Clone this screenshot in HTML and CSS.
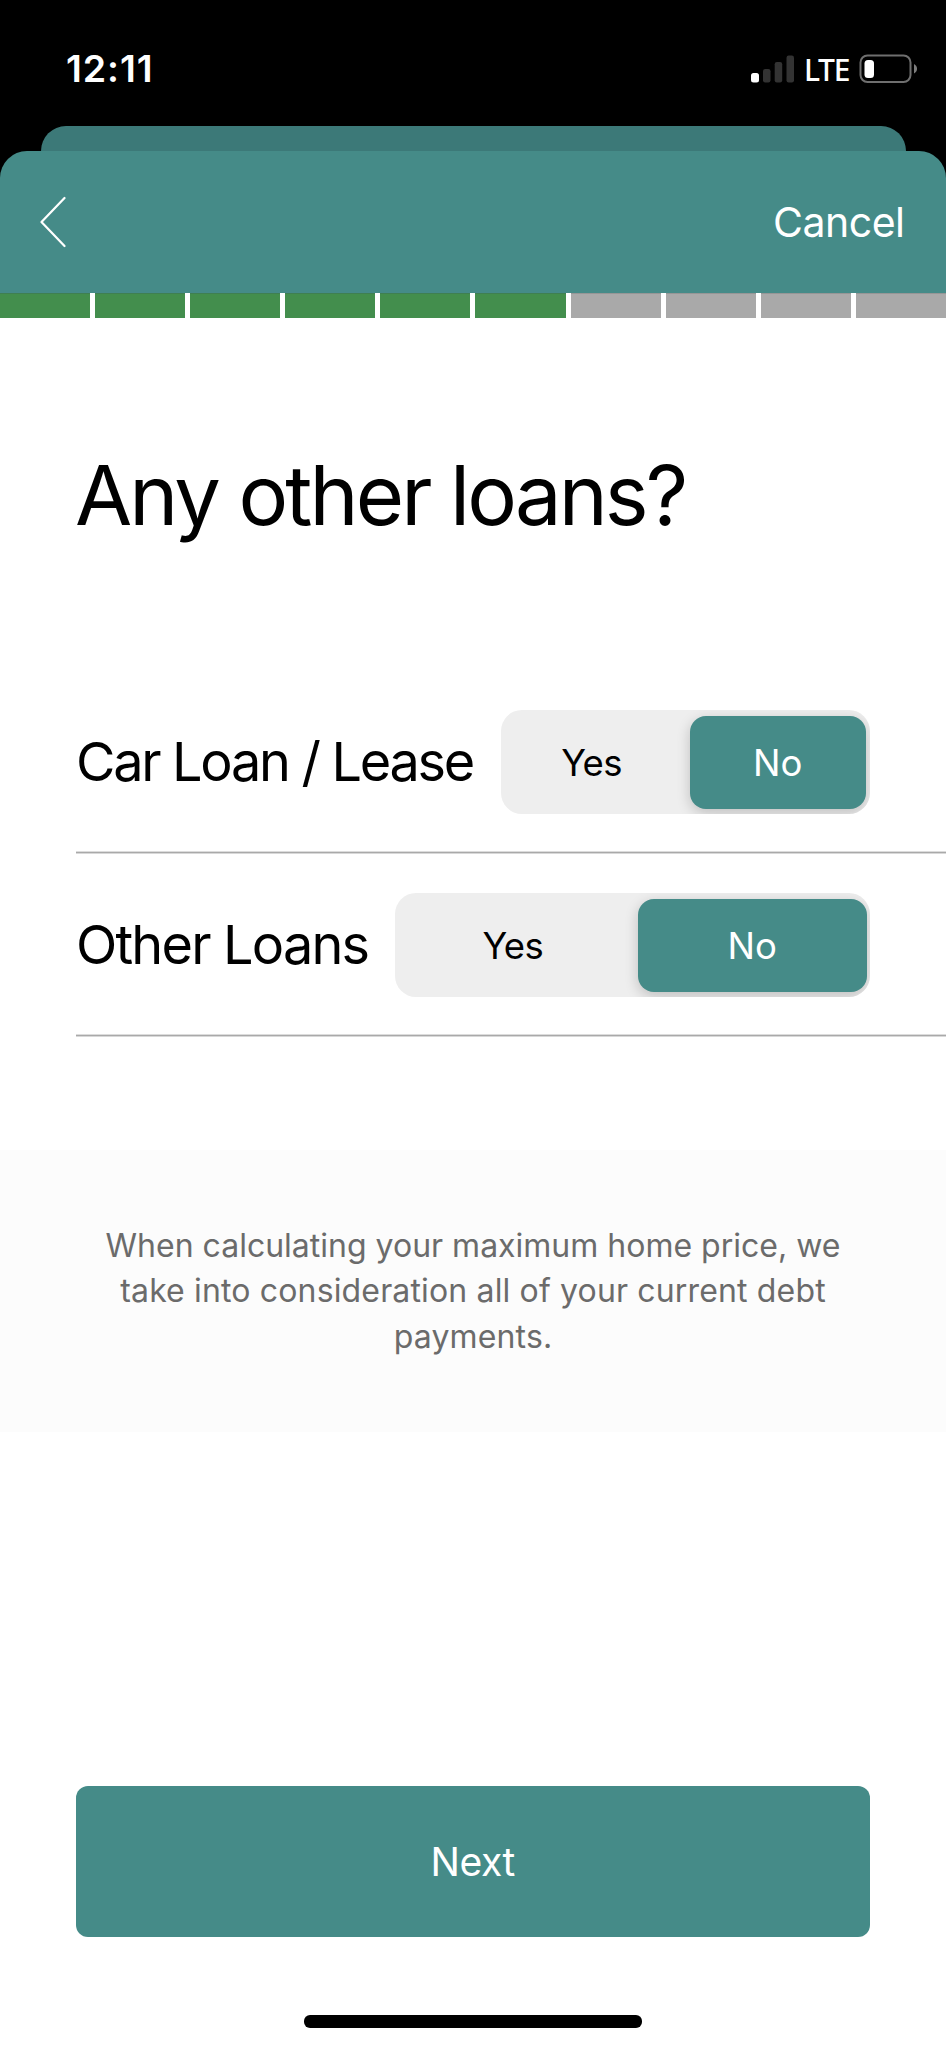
FILE: index.html
```html
<!DOCTYPE html>
<html lang="en">
<head>
<meta charset="utf-8">
<title>Any other loans?</title>
<link rel="stylesheet" href="styles.css">
</head>
<body>
<div class="screen">
  <div class="status">
    <span class="time">12:11</span>
    <div class="status-right">
      <svg class="signal" width="44" height="28" viewBox="0 0 44 28"><rect x="0" y="18" width="8" height="9.500" rx="2.500" fill="#fff"/><g fill="#333"><rect x="12" y="14" width="7.500" height="13.500" rx="2.200"/><rect x="23.700" y="7" width="7.500" height="20.500" rx="2.200"/><rect x="35.500" y="0.500" width="7.500" height="27" rx="2.200"/></g></svg>
      <span class="lte">LTE</span>
      <svg class="battery" width="60" height="30" viewBox="0 0 60 30"><rect x="1.500" y="1.500" width="50" height="26.500" rx="7" fill="none" stroke="#6f6f6f" stroke-width="2"/><rect x="5.500" y="6" width="9.500" height="18" rx="3.500" fill="#fff"/><path d="M55 10v9.500c4-2 4-7.500 0-9.500z" fill="#7c7c7c"/></svg>
    </div>
  </div>
  <div class="sheet-behind"></div>
  <header class="header">
    <svg class="back" width="28" height="52" viewBox="0 0 28 52"><path d="M24.500 2 1.500 26l23 24" fill="none" stroke="#fff" stroke-width="2.200" stroke-linecap="round" stroke-linejoin="round"/></svg>
    <span class="cancel">Cancel</span>
  </header>
  <div class="progress"><i class="done"></i><i class="done"></i><i class="done"></i><i class="done"></i><i class="done"></i><i class="done"></i><i></i><i></i><i></i><i></i></div>
  <h1 class="title">Any other loans?</h1>
  <div class="row">
    <span class="label label-car">Car Loan / Lease</span>
    <div class="segmented car"><span class="option yes">Yes</span><span class="option selected">No</span></div>
  </div>
  <div class="row">
    <span class="label">Other Loans</span>
    <div class="segmented other"><span class="option yes">Yes</span><span class="option selected">No</span></div>
  </div>
  <p class="note"><span class="note-lead">When calculating your maximum home price, we</span><br>take into consideration all of your current debt<br>payments.</p>
  <button class="next">Next</button>
  <div class="home"></div>
</div>
</body>
</html>
```
FILE: styles.css
```css
* { box-sizing: border-box; }
body { margin: 0; background: #fff; font-family: Inter, "Liberation Sans", sans-serif; color: #000; }
.screen { display: flex; flex-direction: column; width: 946px; height: 2048px; background: linear-gradient(#000 180px, #fff 180px); }
.status { display: flex; justify-content: space-between; height: 126px; padding: 54px 27px 0 66px; color: #fff; }
.time { font-size: 37.5px; line-height: 30px; font-weight: 600; letter-spacing: 0.9px; }
.status-right { display: flex; height: 30px; }
.signal { margin: 1px 9px 0 0; }
.lte { flex: none; width: 55px; font: 500 30px/32px "Noto Sans", sans-serif; letter-spacing: -1.300px; }
.sheet-behind { height: 25px; margin: 0 40.500px; border-radius: 25px 25px 0 0; background: #3c7978; }
.header { display: flex; align-items: center; justify-content: space-between; height: 142px; padding: 0 41.500px 0 40px; border-radius: 27px 27px 0 0; background: #458b88; color: #fff; }
.cancel { font-size: 41px; letter-spacing: -0.500px; }
.progress { display: grid; grid-template-columns: repeat(10, 1fr); gap: 5px; height: 25px; background: #fff; }
.progress i { background: #a9a9a9; border-top: 1px solid #969696; }
.progress .done { background: #438e4d; border-top-color: #3f7f52; }
.title { margin: 127px 0 126px 75px; font-size: 83px; font-weight: 400; line-height: 101px; height: 100px; letter-spacing: -2.900px; }
.row { display: flex; align-items: center; justify-content: space-between; height: 182px; margin: 0 0 1px 76px; padding: 39px 76px 38px 0; border-bottom: 1px solid #a9a9a9; box-shadow: 0 1px #d8d8d8, inset 0 -1px #dcdcdc; }
.row + .row { margin-bottom: 114px; }
.label { margin-top: -1px; font-size: 54px; letter-spacing: -1.800px; white-space: nowrap; }
.label-car { letter-spacing: -2.300px; }
.segmented { display: flex; flex: none; height: 104px; overflow: hidden; border-radius: 21px; background: #eee; }
.option { display: flex; align-items: center; justify-content: center; padding-top: 1px; font-size: 36.500px; }
.yes { flex: 1; padding-right: 7px; letter-spacing: -0.700px; }
.selected { height: 93px; margin-top: 5.500px; border-radius: 16px; background: #458b88; color: #fff; box-shadow: 0 4px 14px rgba(0, 0, 0, 0.2); }
.car { width: 369.500px; }
.car .selected { width: 176.500px; margin-right: 4px; }
.other { width: 475px; }
.other .selected { width: 229.500px; margin-right: 3px; }
.note { margin: 0; height: 282px; padding-top: 73px; background: #fcfcfc; color: #6b6b6b; text-align: center; font-size: 32px; line-height: 45.400px; letter-spacing: 0.150px; }
.note-lead { letter-spacing: 0; }
.next { height: 151.500px; margin: 353.500px 76px 0 75.500px; border: 0; border-radius: 12px; background: #458b88; color: #fff; font: 400 39px Inter, sans-serif; letter-spacing: -0.400px; }
.home { width: 338px; height: 12.500px; margin: 78px auto 0; border-radius: 6px; background: #000; }
```
